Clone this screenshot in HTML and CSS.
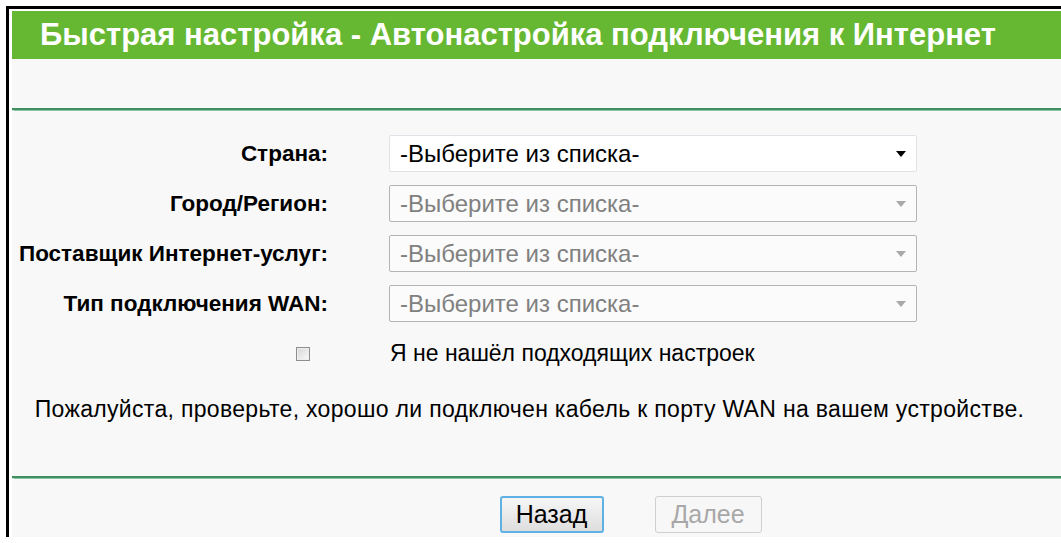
FILE: index.html
```html
<!DOCTYPE html>
<html lang="ru">
<head>
<meta charset="utf-8">
<title>Быстрая настройка</title>
<link rel="stylesheet" href="styles.css">
</head>
<body>
<div class="frame">
  <div class="panel">
    <h1 class="title">Быстрая настройка - Автонастройка подключения к Интернет</h1>
    <div class="spacer"></div>
    <hr class="rule">
    <form class="form">
      <label class="label">Страна:</label>
      <div class="select"><span class="value">-Выберите из списка-</span><span class="arrow"></span></div>

      <label class="label">Город/Регион:</label>
      <div class="select disabled"><span class="value">-Выберите из списка-</span><span class="arrow"></span></div>

      <label class="label">Поставщик Интернет-услуг:</label>
      <div class="select disabled"><span class="value">-Выберите из списка-</span><span class="arrow"></span></div>

      <label class="label">Тип подключения WAN:</label>
      <div class="select disabled"><span class="value">-Выберите из списка-</span><span class="arrow"></span></div>

      <div class="check-cell"><span class="checkbox"></span></div>
      <div class="check-text">Я не нашёл подходящих настроек</div>
    </form>
    <p class="note">Пожалуйста, проверьте, хорошо ли подключен кабель к порту WAN на вашем устройстве.</p>
    <hr class="rule rule-bottom">
    <div class="buttons">
      <button type="button" class="btn btn-focus">Назад</button>
      <button type="button" class="btn" disabled>Далее</button>
    </div>
  </div>
</div>
</body>
</html>
```

FILE: styles.css
```css
html, body {
  margin: 0;
  padding: 0;
  background: #ffffff;
  font-family: "Liberation Sans", Arial, sans-serif;
  color: #000;
}

.frame {
  margin: 6px 0 0 6px;
  border-top: 3px solid #000;
  border-left: 3px solid #000;
  padding: 2px 0 0 3px;
  height: 531px;
  box-sizing: border-box;
}

.panel {
  background: #f8f8f8;
  height: 100%;
  overflow: hidden;
}

.title {
  margin: 0;
  height: 48px;
  background: #66b832;
  color: #fff;
  font-size: 31px;
  font-weight: bold;
  line-height: 47px;
  padding-left: 28px;
  white-space: nowrap;
}

.spacer {
  height: 49px;
}

.rule {
  margin: 0;
  border: 0;
  height: 2px;
  background: #3f8f60;
  box-shadow: 0 0 1px 0.5px #8fc4a4;
}

.form {
  display: grid;
  grid-template-columns: 316px 528px;
  column-gap: 61px;
  row-gap: 13px;
  margin-top: 25px;
  align-items: center;
}

.label {
  justify-self: end;
  font-weight: bold;
  font-size: 22.5px;
}

.select {
  position: relative;
  height: 37px;
  box-sizing: border-box;
  background: #fff;
  border: 1px solid #dfe3e8;
  border-radius: 2px;
  display: flex;
  align-items: center;
  padding-left: 10px;
  font-size: 24px;
}

.select.disabled {
  border-color: #b4b4b4;
  background: #fbfbfb;
  color: #808080;
}

.arrow {
  position: absolute;
  right: 10px;
  top: 15px;
  width: 0;
  height: 0;
  border-left: 5px solid transparent;
  border-right: 5px solid transparent;
  border-top: 6px solid #000;
}

.select.disabled .arrow {
  border-top-color: #a8a8a8;
}

.check-cell {
  justify-self: end;
  margin-right: 18px;
  margin-top: 5px;
  display: flex;
}

.checkbox {
  width: 14px;
  height: 14px;
  box-sizing: border-box;
  border: 1px solid #8e8e8e;
  background: linear-gradient(135deg, #d6d6d6, #fbfbfb);
  box-shadow: inset 0 0 0 1px #eeeeee;
}

.check-text {
  font-size: 23px;
  margin-top: 5px;
  padding-left: 1px;
}

.note {
  margin: 29px 0 0;
  text-align: center;
  font-size: 23px;
  letter-spacing: 0.32px;
  padding-right: 14px;
}

.rule-bottom {
  margin-top: 53px;
}

.buttons {
  display: flex;
  justify-content: center;
  gap: 51px;
  margin-top: 18px;
  padding-left: 188px;
}

.btn {
  font-family: "Liberation Sans", Arial, sans-serif;
  font-size: 25px;
  height: 37px;
  width: 107px;
  padding: 0;
  border-radius: 3px;
  border: 1px solid #b5b5b5;
  background: linear-gradient(#f6f6f6, #dedede);
  color: #000;
}

.btn-focus {
  width: 104px;
  border: 2px solid #5fb0e4;
}

.btn:disabled {
  background: #f7f7f7;
  border-color: #cfcfcf;
  color: #a8a8a8;
}
```
